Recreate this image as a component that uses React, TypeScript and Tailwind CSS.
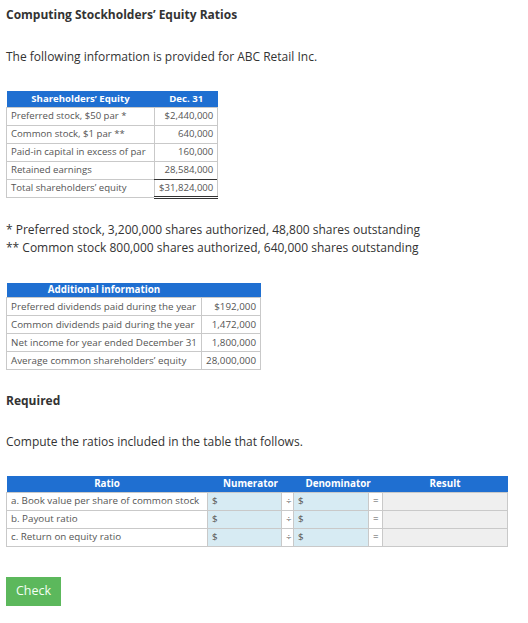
import React from 'react';

const equityRows = [
  { label: 'Preferred stock, $50 par *', value: '$2,440,000' },
  { label: 'Common stock, $1 par **', value: '640,000' },
  { label: 'Paid-in capital in excess of par', value: '160,000' },
  { label: 'Retained earnings', value: '28,584,000' },
];

const infoRows = [
  { label: 'Preferred dividends paid during the year', value: '$192,000' },
  { label: 'Common dividends paid during the year', value: '1,472,000' },
  { label: 'Net income for year ended December 31', value: '1,800,000' },
  { label: 'Average common shareholders\u2019 equity', value: '28,000,000' },
];

const ratios = [
  'a. Book value per share of common stock',
  'b. Payout ratio',
  'c. Return on equity ratio',
];

const cell = 'border border-[#c9c9c9] px-[4px] h-[18px] leading-none whitespace-nowrap';

export default function App() {
  return (
    <div
      className="w-[528px] min-h-[623px] bg-white text-[#333] px-[6px] pt-[8px]"
      style={{ fontFamily: '"Open Sans", "Liberation Sans", sans-serif' }}
    >
      <h1 className="text-[12px] font-bold leading-[14px]">Computing Stockholders&rsquo; Equity Ratios</h1>

      <p className="mt-[28px] text-[12px] leading-[14px]">
        The following information is provided for ABC Retail Inc.
      </p>

      {/* Equity table */}
      <table className="mt-[27px] border-collapse text-[9.6px] text-[#555]">
        <thead>
          <tr className="bg-[#1f6fd1] text-white h-[16px]">
            <th className="w-[148px] text-center font-bold">Shareholders&rsquo; Equity</th>
            <th className="w-[62px] text-center font-bold">Dec. 31</th>
          </tr>
        </thead>
        <tbody>
          {equityRows.map((r, i) => (
            <tr key={r.label}>
              <td className={`${cell} px-[3px]`}>{r.label}</td>
              <td
                className={`${cell} px-[3px] text-right ${i === equityRows.length - 1 ? 'border-b-[#333]' : ''}`}
              >
                {r.value}
              </td>
            </tr>
          ))}
          <tr>
            <td className={`${cell} px-[3px]`}>Total shareholders&rsquo; equity</td>
            <td className={`${cell} px-[3px] text-right border-t-[#333] border-b-[3px] border-b-[#333] border-double`}>
              $31,824,000
            </td>
          </tr>
        </tbody>
      </table>

      <div className="mt-[22px] text-[12px] leading-[18px]">
        <p>* Preferred stock, 3,200,000 shares authorized, 48,800 shares outstanding</p>
        <p>** Common stock 800,000 shares authorized, 640,000 shares outstanding</p>
      </div>

      {/* Additional information */}
      <table className="mt-[26px] border-collapse text-[9.8px] text-[#555] w-[255px]">
        <thead>
          <tr className="bg-[#1f6fd1] text-white h-[15px]">
            <th className="w-[200px] text-center font-bold">Additional information</th>
            <th></th>
          </tr>
        </thead>
        <tbody>
          {infoRows.map((r) => (
            <tr key={r.label}>
              <td className={cell}>{r.label}</td>
              <td className={`${cell} text-right`}>{r.value}</td>
            </tr>
          ))}
        </tbody>
      </table>

      <h2 className="mt-[24px] text-[12px] font-bold leading-[14px]">Required</h2>

      <p className="mt-[27px] text-[12px] leading-[14px]">Compute the ratios included in the table that follows.</p>

      {/* Ratio table */}
      <table className="mt-[27px] border-collapse text-[9.8px] text-[#555] w-[501px] table-fixed">
        <colgroup>
          <col className="w-[201px]" />
          <col className="w-[74px]" />
          <col className="w-[12px]" />
          <col className="w-[75px]" />
          <col className="w-[14px]" />
          <col className="w-[125px]" />
        </colgroup>
        <thead>
          <tr className="bg-[#1f6fd1] text-white h-[16px]">
            <th className="font-bold text-center">Ratio</th>
            <th className="font-bold text-center" colSpan={2}>Numerator</th>
            <th className="font-bold text-center" colSpan={2}>Denominator</th>
            <th className="font-bold text-center">Result</th>
          </tr>
        </thead>
        <tbody>
          {ratios.map((r) => (
            <tr key={r}>
              <td className={cell}>{r}</td>
              <td className={`${cell} bg-[#d7ebf3]`}>$</td>
              <td className={`${cell} text-center px-0`}>÷</td>
              <td className={`${cell} bg-[#d7ebf3]`}>$</td>
              <td className={`${cell} text-center px-0`}>=</td>
              <td className={`${cell} bg-[#efefef]`}></td>
            </tr>
          ))}
        </tbody>
      </table>

      <button className="mt-[30px] w-[55px] h-[29px] bg-[#5cb85c] text-[#f4fff4] text-[12.5px]">Check</button>
    </div>
  );
}
